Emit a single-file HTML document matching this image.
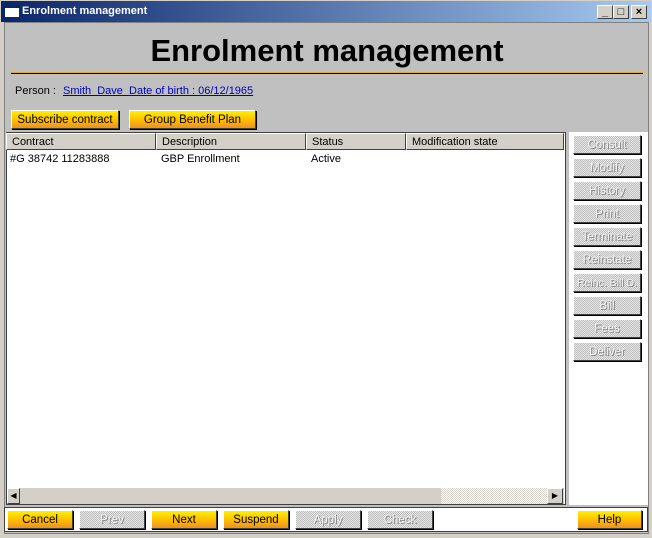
<!DOCTYPE html>
<html><head><style>
*{margin:0;padding:0;box-sizing:border-box}
body{width:652px;height:538px;background:#d4d0c8;font-family:"Liberation Sans",sans-serif;font-size:11px;position:relative;overflow:hidden}
.a{position:absolute}
.tb{left:0;top:0;width:652px;height:22px;background:linear-gradient(90deg,#0a246a,#a6caf0);border:1px solid #d4d0c8;border-bottom:none}
.cap{left:22px;top:5px;color:#fff;font-weight:bold;font-size:11px}
.wb{width:16px;height:14px;background:#d4d0c8;border:1px solid;border-color:#fff #404040 #404040 #fff;top:5px;font-size:11px;font-weight:bold;text-align:center;line-height:12px}
.main{left:4px;top:22px;width:645px;height:512px;background:#c0c0c0;border:1px solid #808080}
.yb{background:linear-gradient(#fff000,#ffc000 50%,#f09020);border:1px solid;border-color:#fff #404040 #404040 #fff;box-shadow:1px 1px 0 #000;text-align:center;font-size:11.5px;line-height:18px}
.gb{background:repeating-conic-gradient(#c0c0c0 0 25%,#e4e4e4 0 50%) 0 0/2px 2px;border:1px solid;border-color:#fff #404040 #404040 #fff;box-shadow:1px 1px 0 #000;text-align:center;font-size:11.5px;line-height:18px;color:#f0f0f0;text-shadow:1px 1px 0 #888}
.hd{top:133px;height:17px;background:#d4d0c8;border:1px solid;border-color:#fff #404040 #404040 #fff;padding-left:5px;line-height:16px}
</style></head><body>
<div class="a tb"></div>
<div class="a" style="left:5px;top:5px;width:14px;height:12px;background:#fff;border-top:3px solid #0a246a"></div>
<div class="a cap">Enrolment management</div>
<div class="a wb" style="left:597px">_</div>
<div class="a wb" style="left:613px">□</div>
<div class="a wb" style="left:631px">×</div>
<div class="a main"></div>
<div class="a" style="left:0;top:33px;width:652px;text-align:center;font-size:31px;font-weight:bold;padding-left:2px">Enrolment management</div>
<div class="a" style="left:11px;top:72px;width:632px;height:2px;background:#e8b000;border-bottom:1px solid #000"></div>
<div class="a" style="left:15px;top:85px;font-size:11px">Person :</div>
<div class="a" style="left:63px;top:85px;color:#0000c0;text-decoration:underline">Smith&nbsp; Dave&nbsp; Date of birth : 06/12/1965</div>
<div class="a yb" style="left:11px;top:110px;width:108px;height:19px">Subscribe contract</div>
<div class="a yb" style="left:129px;top:110px;width:127px;height:19px">Group Benefit Plan</div>
<div class="a" style="left:6px;top:132px;width:560px;height:373px;background:#fff;border:1px solid #404040"></div>
<div class="a hd" style="left:6px;width:150px">Contract</div>
<div class="a hd" style="left:156px;width:150px">Description</div>
<div class="a hd" style="left:306px;width:100px">Status</div>
<div class="a hd" style="left:406px;width:158px">Modification state</div>
<div class="a" style="left:10px;top:153px">#G 38742 11283888</div>
<div class="a" style="left:161px;top:153px">GBP Enrollment</div>
<div class="a" style="left:311px;top:153px">Active</div>
<div class="a" style="left:7px;top:488px;width:557px;height:16px;background:#d4d0c8"></div>
<div class="a" style="left:441px;top:488px;width:106px;height:16px;background:repeating-conic-gradient(#d4d0c8 0 25%,#fff 0 50%) 0 0/2px 2px"></div>
<div class="a" style="left:7px;top:488px;width:13px;height:16px;border:1px solid;border-color:#fff #404040 #404040 #fff;font-size:8px;line-height:14px;text-align:center">◀</div>
<div class="a" style="left:547px;top:488px;width:16px;height:16px;border:1px solid;border-color:#fff #404040 #404040 #fff;font-size:8px;line-height:14px;text-align:center;background:#d4d0c8">▶</div>
<div class="a" style="left:569px;top:132px;width:79px;height:373px;background:#fff"></div>
<div class="a gb" style="left:573px;top:135px;width:68px;height:19px">Consult</div>
<div class="a gb" style="left:573px;top:158px;width:68px;height:19px">Modify</div>
<div class="a gb" style="left:573px;top:181px;width:68px;height:19px">History</div>
<div class="a gb" style="left:573px;top:204px;width:68px;height:19px">Print</div>
<div class="a gb" style="left:573px;top:227px;width:68px;height:19px">Terminate</div>
<div class="a gb" style="left:573px;top:250px;width:68px;height:19px">Reinstate</div>
<div class="a gb" style="left:573px;top:273px;width:68px;height:19px;font-size:10.5px">Reinc. Bill D.</div>
<div class="a gb" style="left:573px;top:296px;width:68px;height:19px">Bill</div>
<div class="a gb" style="left:573px;top:319px;width:68px;height:19px">Fees</div>
<div class="a gb" style="left:573px;top:342px;width:68px;height:19px">Deliver</div>
<div class="a" style="left:4px;top:507px;width:644px;height:25px;background:#fff;border:1px solid #404040"></div>
<div class="a yb" style="left:7px;top:510px;width:66px;height:19px">Cancel</div>
<div class="a gb" style="left:79px;top:510px;width:66px;height:19px">Prev</div>
<div class="a yb" style="left:151px;top:510px;width:66px;height:19px">Next</div>
<div class="a yb" style="left:223px;top:510px;width:66px;height:19px">Suspend</div>
<div class="a gb" style="left:295px;top:510px;width:66px;height:19px">Apply</div>
<div class="a gb" style="left:367px;top:510px;width:66px;height:19px">Check</div>
<div class="a yb" style="left:577px;top:510px;width:65px;height:19px">Help</div>
</body></html>
